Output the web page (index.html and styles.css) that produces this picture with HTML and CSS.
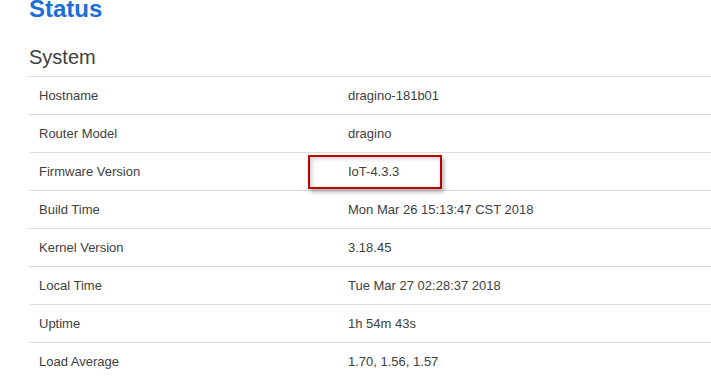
FILE: index.html
```html
<!DOCTYPE html>
<html>
	<head>
		<meta charset="utf-8" />
		<title>Status</title>
		<link rel="stylesheet" href="styles.css">
	</head>
	<body>
		<div id="main">
			<h2 class="title">Status</h2>
			<h3 class="section">System</h3>
			<div class="table">
				<div class="row"><div class="label">Hostname</div><div class="value">dragino-181b01</div></div>
				<div class="row"><div class="label">Router Model</div><div class="value">dragino</div></div>
				<div class="row"><div class="label">Firmware Version</div><div class="value">IoT-4.3.3<span class="mark"></span></div></div>
				<div class="row"><div class="label">Build Time</div><div class="value">Mon Mar 26 15:13:47 CST 2018</div></div>
				<div class="row"><div class="label">Kernel Version</div><div class="value">3.18.45</div></div>
				<div class="row"><div class="label">Local Time</div><div class="value">Tue Mar 27 02:28:37 2018</div></div>
				<div class="row"><div class="label">Uptime</div><div class="value">1h 54m 43s</div></div>
				<div class="row"><div class="label">Load Average</div><div class="value">1.70, 1.56, 1.57</div></div>
			</div>
		</div>
	</body>
</html>
```

FILE: styles.css
```css
body{
	margin: 0;
	background-color: #ffffff;
	font-family: "Liberation Sans", Arial, sans-serif;
	color: #404040;
	overflow: hidden;
}
#main{
	padding-left: 29px;
}
.title{
	margin: -3px 0 0 0;
	font-size: 24px;
	line-height: 24px;
	font-weight: bold;
	color: #1c6ed8;
}
.section{
	margin: 24px 0 7px 0;
	font-size: 20px;
	line-height: 24px;
	font-weight: normal;
	color: #404040;
}
.row{
	display: flex;
	height: 37px;
	border-top: 1px solid #dddddd;
	font-size: 13px;
}
.label{
	width: 309px;
	padding-left: 10px;
	display: flex;
	align-items: center;
}
.value{
	position: relative;
	flex: 1;
	display: flex;
	align-items: center;
}
/* 红框标注 */
.mark{
	position: absolute;
	left: -40px;
	top: 2px;
	width: 134px;
	height: 34px;
	box-sizing: border-box;
	border: 2px solid #c00000;
	box-shadow: 2px 3px 4px rgba(0,0,0,0.3), inset 2px 2px 4px rgba(0,0,0,0.18);
}
```
